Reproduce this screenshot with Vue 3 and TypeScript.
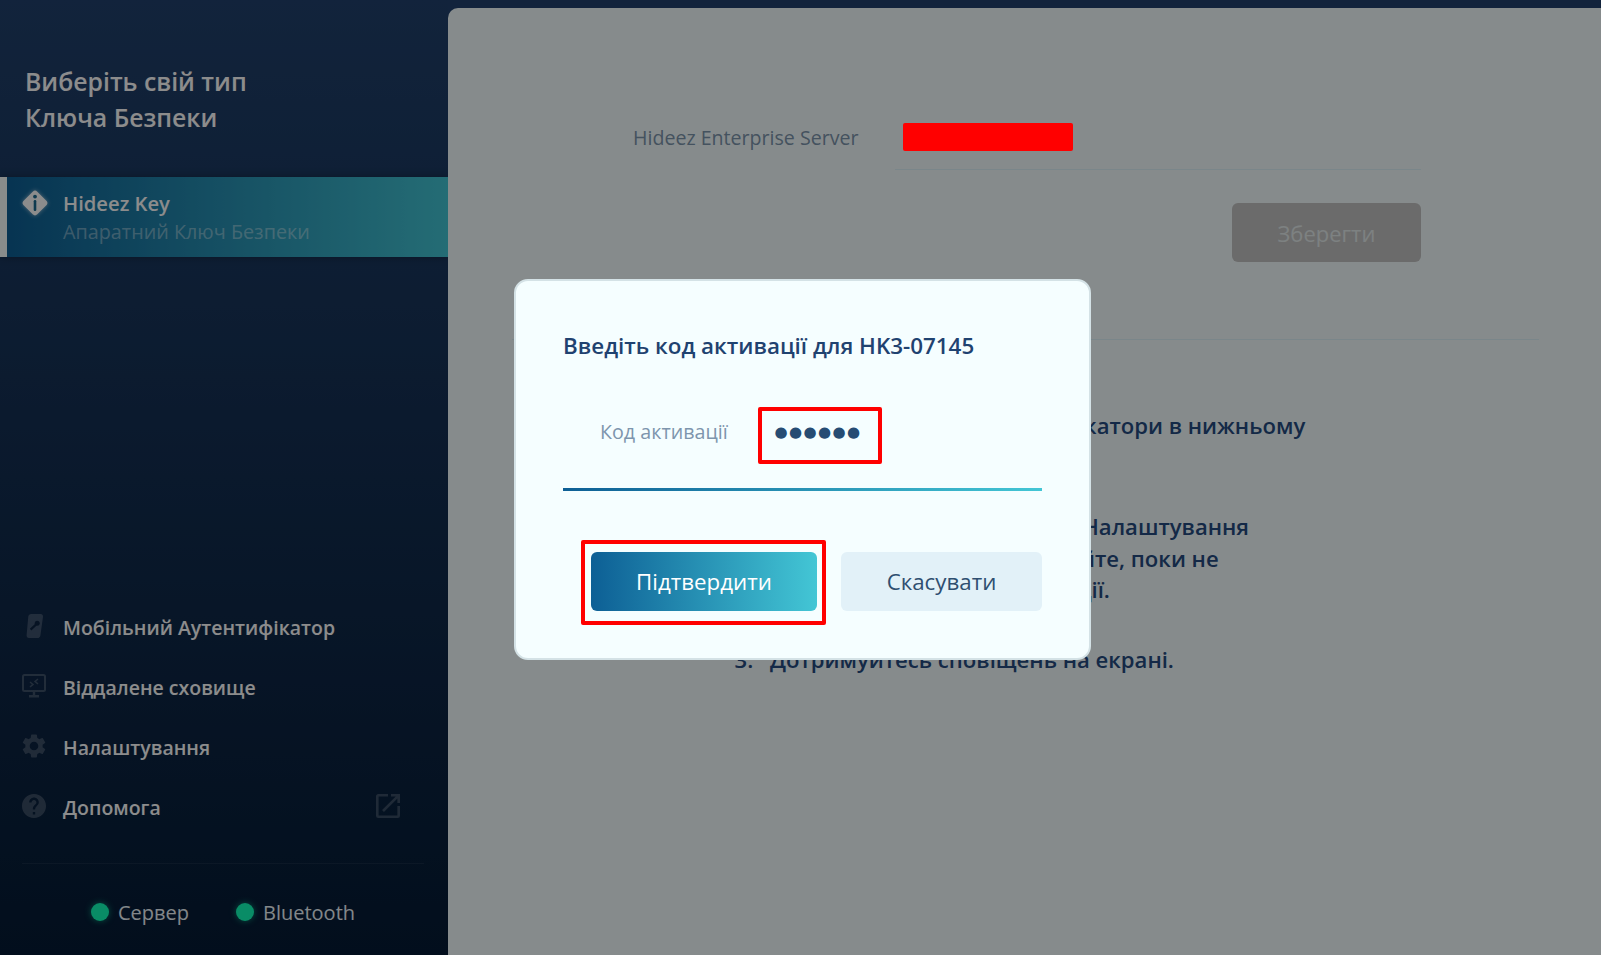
<script setup lang="ts">
const menu = [
  { id: "mobile", label: "Мобільний Аутентифікатор" },
  { id: "vault", label: "Віддалене сховище" },
  { id: "settings", label: "Налаштування" },
  { id: "help", label: "Допомога" },
];
const statuses = ["Сервер", "Bluetooth"];
</script>

<template>
  <div class="app">
    <aside class="sidebar">
      <h1 class="side-title">Виберіть свій тип<br />Ключа Безпеки</h1>
      <div class="key-row">
        <svg class="key-icon" viewBox="0 0 28 28">
          <path
            d="M14 1.5c.8 0 1.5.3 2 .9l9.6 9.6c1.1 1.1 1.1 2.9 0 4l-9.6 9.6c-1.1 1.1-2.9 1.1-4 0l-9.6-9.6c-1.1-1.1-1.1-2.9 0-4L12 2.4c.5-.6 1.2-.9 2-.9z"
            fill="#fff"
          />
          <circle cx="14" cy="7.6" r="1.9" fill="#1b6a90" />
          <rect x="12.7" y="11" width="2.6" height="11" rx="1.2" fill="#1b6a90" />
        </svg>
        <div>
          <div class="key-name">Hideez Key</div>
          <div class="key-sub">Апаратний Ключ Безпеки</div>
        </div>
      </div>

      <nav class="menu">
        <div v-for="item in menu" :key="item.id" class="menu-item">
          <svg v-if="item.id === 'mobile'" class="menu-icon" viewBox="-1 0 24 24">
            <path
              d="M8.2 0h9.4c1.5 0 2.6 1.3 2.4 2.8l-2.6 18.6c-.2 1.5-1.4 2.6-2.9 2.6H6c-1.5 0-2.6-1.3-2.4-2.8L5.3 2.6C5.5 1.1 6.7 0 8.2 0z"
              fill="#fff"
            />
            <circle cx="14.2" cy="9.3" r="2.5" fill="#071628" />
            <path d="M13.2 10.4l-5.6 5.2" stroke="#071628" stroke-width="2.2" fill="none" />
          </svg>
          <svg v-else-if="item.id === 'vault'" class="menu-icon" viewBox="0 0 24 24" fill="none" stroke="#fff">
            <rect x="1" y="1" width="22" height="16" rx="1.5" stroke-width="2" />
            <path d="M8 8l3 2.4L8 13M16 5l-3 2.4L16 10" stroke-width="1.5" />
            <path d="M12 18v3M7 22.2h10" stroke-width="2.4" />
          </svg>
          <svg v-else-if="item.id === 'settings'" class="menu-icon" viewBox="2 2 20 20">
            <path
              fill="#fff"
              d="M19.14 12.94c.04-.3.06-.61.06-.94 0-.32-.02-.64-.07-.94l2.03-1.58a.49.49 0 0 0 .12-.61l-1.92-3.32a.488.488 0 0 0-.59-.22l-2.39.96c-.5-.38-1.03-.7-1.62-.94l-.36-2.54a.484.484 0 0 0-.48-.41h-3.84c-.24 0-.43.17-.47.41l-.36 2.54c-.59.24-1.13.57-1.62.94l-2.39-.96c-.22-.08-.47 0-.59.22L2.74 8.87c-.12.21-.08.47.12.61l2.03 1.58c-.05.3-.09.63-.09.94s.02.64.07.94l-2.03 1.58a.49.49 0 0 0-.12.61l1.92 3.32c.12.22.37.29.59.22l2.39-.96c.5.38 1.03.7 1.62.94l.36 2.54c.05.24.24.41.48.41h3.84c.24 0 .44-.17.47-.41l.36-2.54c.59-.24 1.13-.56 1.62-.94l2.39.96c.22.08.47 0 .59-.22l1.92-3.32c.12-.22.07-.47-.12-.61l-2.01-1.58zM12 15.6c-1.98 0-3.6-1.62-3.6-3.6s1.62-3.6 3.6-3.6 3.6 1.62 3.6 3.6-1.62 3.6-3.6 3.6z"
            />
          </svg>
          <svg v-else class="menu-icon" viewBox="2 2 20 20">
            <path
              fill="#fff"
              d="M12 2C6.48 2 2 6.48 2 12s4.48 10 10 10 10-4.48 10-10S17.52 2 12 2zm1 17h-2v-2h2v2zm2.07-7.75l-.9.92C13.45 12.9 13 13.5 13 15h-2v-.5c0-1.1.45-2.1 1.17-2.83l1.24-1.26c.37-.36.59-.86.59-1.41 0-1.1-.9-2-2-2s-2 .9-2 2H8c0-2.21 1.79-4 4-4s4 1.79 4 4c0 .88-.36 1.68-.93 2.25z"
            />
          </svg>
          <span class="menu-label">{{ item.label }}</span>
          <svg v-if="item.id === 'help'" class="link-icon" viewBox="0 0 24 24" fill="none" stroke="#fff" stroke-width="2.6">
            <path d="M12 1.3H2.3a1 1 0 0 0-1 1v19.4a1 1 0 0 0 1 1h19.4a1 1 0 0 0 1-1V12" />
            <path d="M7 17L22.7 1.3M15 1.3h7.7V9" />
          </svg>
        </div>
      </nav>

      <div class="status-bar">
        <div v-for="s in statuses" :key="s" class="status">
          <span class="dot"></span>{{ s }}
        </div>
      </div>
    </aside>

    <main class="content">
      <div class="server-row">
        <span class="server-label">Hideez Enterprise Server</span>
        <div class="server-input"><span class="redacted"></span></div>
      </div>
      <div class="save-row">
        <button class="save-btn" type="button">Зберегти</button>
      </div>
      <div class="divider"></div>
      <ol class="steps">
        <li>Переконайтеся, що&nbsp; всі індикатори в нижньому<br />лівому куті світяться.</li>
        <li>Відкрийте вкладку Hideez у Налаштування<br />Затисніть кнопку та утримуйте, поки не<br />з'явиться екран для активації.</li>
        <li>Дотримуйтесь сповіщень на екрані.</li>
      </ol>
    </main>

    <div class="overlay">
      <div class="modal">
        <h2 class="modal-title">Введіть код активації для HK3-07145</h2>
        <div class="code-row">
          <span class="code-label">Код активації</span>
          <span class="mark code-mark">●●●●●●</span>
        </div>
        <div class="code-line"></div>
        <div class="modal-actions">
          <div class="mark btn-mark">
            <button class="btn-primary" type="button">Підтвердити</button>
          </div>
          <button class="btn-cancel" type="button">Скасувати</button>
        </div>
      </div>
    </div>
  </div>
</template>

<style>
html,
body {
  margin: 0;
  height: 100%;
  overflow: hidden;
}
</style>

<style scoped>
.app {
  display: flex;
  height: 100vh;
  background: #21416d;
  font-family: "Open Sans", "Noto Sans", sans-serif;
  color: #fff;
  overflow: hidden;
}

.sidebar {
  width: 448px;
  flex: none;
  display: flex;
  flex-direction: column;
  background: linear-gradient(180deg, #21416d 0%, #051b35 100%);
}
.side-title {
  margin: 0;
  padding: 63px 0 41px 25px;
  font-size: 24.8px;
  line-height: 36px;
  font-weight: 600;
  height: 72px;
}
.key-row {
  height: 80px;
  margin-top: 1px;
  border-left: 7px solid #fafffe;
  display: flex;
  gap: 14px;
  padding-left: 14px;
  padding-top: 12px;
  box-sizing: border-box;
  background: linear-gradient(90deg, #0d5f95 0%, #43c6d5 100%);
  box-shadow: 0 0 8px rgba(0, 0, 0, 0.3);
}
.key-icon {
  width: 28px;
  height: 28px;
  flex: none;
  filter: drop-shadow(0 0 2px rgba(255, 255, 255, 0.6));
}
.key-name {
  font-size: 20.2px;
  font-weight: 600;
  line-height: 28px;
}
.key-sub {
  font-size: 19.8px;
  line-height: 30px;
  color: rgba(255, 255, 255, 0.4);
}

.menu {
  margin-top: auto;
}
.menu-item {
  height: 60px;
  display: flex;
  align-items: center;
  padding-left: 22px;
  padding-right: 48px;
}
.menu-icon {
  width: 24px;
  height: 24px;
  flex: none;
  margin-right: 17px;
  margin-top: -2px;
  opacity: 0.2;
}
.menu-label {
  font-size: 19.5px;
  font-weight: 600;
  color: #fff;
  flex: 1;
}
.link-icon {
  width: 24px;
  height: 24px;
  margin-top: -2px;
  opacity: 0.2;
}

.status-bar {
  margin: 26px 24px 0 22px;
  height: 92px;
  box-sizing: border-box;
  border-top: 1px solid rgba(255, 255, 255, 0.06);
  display: flex;
  justify-content: center;
  gap: 47px;
  padding-top: 31px;
}
.status {
  display: flex;
  align-items: center;
  height: 34px;
  font-size: 20px;
  color: #eef6fb;
  gap: 9px;
}
.dot {
  width: 18px;
  height: 18px;
  border-radius: 50%;
  background: #12ffba;
  box-shadow: 0 0 6px rgba(18, 255, 186, 0.5);
}

.content {
  flex: 1;
  margin-top: 8px;
  background: #f5feff;
  border-top-left-radius: 10px;
  color: #264c81;
}
.server-row {
  display: flex;
  margin-top: 115px;
  height: 47px;
  padding-left: 185px;
}
.server-label {
  width: 262px;
  font-size: 19.6px;
  line-height: 30px;
  color: #7d95ad;
}
.server-input {
  width: 526px;
  height: 47px;
  box-sizing: border-box;
  padding-left: 8px;
  border-bottom: 1px solid #dff5fb;
}
/* stays at full colour above the dimming layer, as in the screenshot */
.redacted {
  display: block;
  position: relative;
  z-index: 2;
  width: 170px;
  height: 28px;
  background: #ff0000;
  border-radius: 2px;
}
.save-row {
  display: flex;
  justify-content: flex-end;
  margin-top: 33px;
  width: 973px;
}
.save-btn {
  width: 189px;
  height: 59px;
  border: 0;
  border-radius: 6px;
  background: #c3c3c3;
  color: #e3ebec;
  font: 400 22px "Open Sans", sans-serif;
}
.divider {
  height: 1px;
  margin: 77px 62px 0 64px;
  background: #dff5fb;
}
.steps {
  margin: 70px 0 0;
  padding: 0 0 0 311px;
  font-size: 22.1px;
  font-weight: 600;
  line-height: 31.6px;
}
.steps li {
  padding-left: 11px;
  margin-bottom: 38px;
}

.overlay {
  position: fixed;
  inset: 0;
  z-index: 1;
  background: rgba(0, 0, 0, 0.45);
  display: flex;
  align-items: center;
  justify-content: center;
  padding: 0 0 16px 4px;
  box-sizing: border-box;
}
.modal {
  width: 577px;
  height: 381px;
  box-sizing: border-box;
  padding: 49px 47px 0 47px;
  background: #f5feff;
  border: 2px solid #d4e2e6;
  border-radius: 14px;
  color: #264c81;
}
.modal-title {
  margin: 0;
  font-size: 22.4px;
  line-height: 32px;
  font-weight: 600;
  color: #1f4270;
}
.code-row {
  display: flex;
  align-items: center;
  margin-top: 45px;
  padding-left: 37px;
}
.code-label {
  width: 158px;
  font-size: 19.7px;
  color: #7d95ad;
  margin-top: -8px;
}
.mark {
  border: 4px solid #ff0000;
  border-radius: 2px;
  box-sizing: border-box;
}
.code-mark {
  width: 124px;
  height: 57px;
  display: flex;
  align-items: center;
  justify-content: center;
  padding: 0 4px 8px 0;
  font-family: "DejaVu Sans", sans-serif;
  font-size: 15px;
  letter-spacing: 1.4px;
  color: #264c73;
}
.code-line {
  height: 3px;
  margin-top: 24px;
  background: linear-gradient(90deg, #0d5f95 0%, #43c6d5 100%);
}
.modal-actions {
  display: flex;
  align-items: flex-start;
  margin-top: 49px;
  padding-left: 18px;
}
.btn-mark {
  padding: 8px 5px 10px 6px;
  margin-right: 15px;
}
.btn-primary,
.btn-cancel {
  display: block;
  height: 59px;
  border: 0;
  border-radius: 6px;
  font: 400 22.3px "Open Sans", sans-serif;
}
.btn-primary {
  width: 226px;
  background: linear-gradient(90deg, #0d5f95 0%, #43c6d5 100%);
  color: #fff;
}
.btn-cancel {
  width: 201px;
  margin-top: 12px;
  background: #e2f1f8;
  color: #2f4f70;
}
</style>
